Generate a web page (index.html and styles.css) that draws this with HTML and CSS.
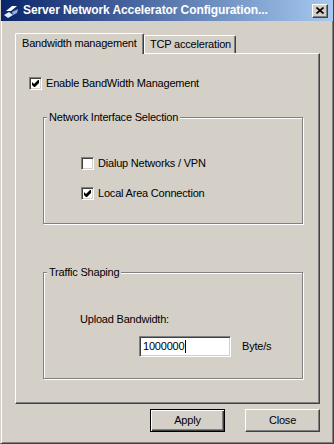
FILE: index.html
```html
<!DOCTYPE html>
<html lang="en">
<head>
  <meta charset="UTF-8" />
  <title>Server Network Accelerator Configuration</title>
  <link rel="stylesheet" href="styles.css">
</head>
<body>
  <div class="window">
    <div class="titlebar">
      <svg class="app-icon" width="16" height="16" viewBox="0 0 16 16">
        <polygon points="3,8 9,3 14,3 8,8" fill="#ffffff"/>
        <polygon points="1,12 6,9 10,12 5,15" fill="#e4ecf8"/>
        <polygon points="9,9 15,6 14,10 10,12" fill="#8fb2e0"/>
      </svg>
      <span class="title">Server Network Accelerator Configuration...</span>
      <span class="close-btn">
        <svg width="8" height="7" viewBox="0 0 8 7">
          <path d="M0.5 0.5 L7.5 6.5 M7.5 0.5 L0.5 6.5" stroke="#000" stroke-width="1.7"/>
        </svg>
      </span>
    </div>

    <div class="content">
      <div class="tabs">
        <div class="tab active">Bandwidth management</div>
        <div class="tab">TCP acceleration</div>
      </div>

      <div class="panel">
        <label class="check enable">
          <span class="box"><svg width="7" height="7" viewBox="0 0 7 7"><polygon points="0,2 2,4 6,0 7,0 7,3 3,7 2,7 0,5" fill="#000"/></svg></span>
          Enable BandWidth Management
        </label>

        <fieldset class="group network">
          <legend>Network Interface Selection</legend>
          <div class="group-body">
            <label class="check">
              <span class="box"></span>
              Dialup Networks / VPN
            </label>
            <label class="check">
              <span class="box"><svg width="7" height="7" viewBox="0 0 7 7"><polygon points="0,2 2,4 6,0 7,0 7,3 3,7 2,7 0,5" fill="#000"/></svg></span>
              Local Area Connection
            </label>
          </div>
        </fieldset>

        <fieldset class="group traffic">
          <legend>Traffic Shaping</legend>
          <div class="group-body">
            <div class="field-label">Upload Bandwidth:</div>
            <div class="field-row">
              <div class="textbox">1000000<span class="caret"></span></div>
              <span class="unit">Byte/s</span>
            </div>
          </div>
        </fieldset>
      </div>

      <div class="actions">
        <button class="btn default">Apply</button>
        <button class="btn">Close</button>
      </div>
    </div>
  </div>
</body>
</html>
```

FILE: styles.css
```css
* {
  box-sizing: border-box;
  margin: 0;
  padding: 0;
}

body {
  background: #d4d0c8;
  font-family: "Liberation Sans", Arial, sans-serif;
  font-size: 11px;
  line-height: 13px;
  letter-spacing: -0.2px;
  color: #000;
}

.window {
  width: 334px;
  height: 444px;
  display: flex;
  flex-direction: column;
  border-left: 1px solid #d4d0c8;
  border-right: 1px solid #404040;
  border-bottom: 1px solid #404040;
  box-shadow: inset 1px 0 #ffffff, inset -1px -1px #808080;
}

/* title bar */
.titlebar {
  height: 21px;
  display: flex;
  align-items: center;
  padding: 0 5px 0 2px;
  background: linear-gradient(to right, #0a246a, #a6caf0);
}

.app-icon {
  flex: none;
}

.title {
  flex: 1;
  margin-left: 4px;
  color: #fff;
  font-weight: bold;
  font-size: 12px;
  letter-spacing: -0.1px;
  white-space: nowrap;
}

.close-btn {
  width: 16px;
  height: 14px;
  display: flex;
  align-items: center;
  justify-content: center;
  background: #d4d0c8;
  border-top: 1px solid #fff;
  border-left: 1px solid #fff;
  border-right: 1px solid #404040;
  border-bottom: 1px solid #404040;
  box-shadow: inset -1px -1px #808080;
}

/* dialog body */
.content {
  flex: 1;
  display: flex;
  flex-direction: column;
  padding: 12px 13px 0 14px;
}

.tabs {
  display: flex;
  align-items: flex-end;
  height: 21px;
  margin-bottom: -1px;
}

.tab {
  height: 18px;
  width: 92px;
  margin-bottom: 1px;
  padding: 2px 0 0 5px;
  border-top: 1px solid #fff;
  border-left: 1px solid #fff;
  border-right: 1px solid #404040;
  border-radius: 2px 2px 0 0;
  box-shadow: inset -1px 0 #808080;
  white-space: nowrap;
}

.tab.active {
  position: relative;
  z-index: 1;
  width: 129px;
  height: 21px;
  margin-bottom: 0;
  padding: 3px 0 0 6px;
  background: #d4d0c8;
}

.panel {
  height: 351px;
  border-top: 1px solid #fff;
  border-left: 1px solid #fff;
  border-right: 1px solid #404040;
  border-bottom: 1px solid #404040;
  box-shadow: inset -1px -1px #808080;
}

/* checkboxes */
.check {
  display: flex;
  align-items: center;
  gap: 4px;
}

.enable {
  margin: 23px 0 0 13px;
}

.box {
  width: 13px;
  height: 13px;
  display: flex;
  align-items: center;
  justify-content: center;
  background: #fff;
  border-top: 1px solid #808080;
  border-left: 1px solid #808080;
  border-right: 1px solid #fff;
  border-bottom: 1px solid #fff;
  box-shadow: inset 1px 1px #404040, inset -1px -1px #d4d0c8;
}

/* group boxes */
.group {
  width: 260px;
  margin-left: 27px;
  border: 1px solid #808080;
  box-shadow: inset 1px 1px #fff, 1px 1px #fff;
}

.group legend {
  margin-left: 3px;
  padding: 0 2px;
  background: #d4d0c8;
}

.network {
  margin-top: 21px;
}

.network .group-body {
  display: flex;
  flex-direction: column;
  gap: 17px;
  padding: 33px 0 23px 37px;
}

.traffic {
  margin-top: 42px;
}

.traffic .group-body {
  padding: 34px 0 21px 36px;
}

.field-row {
  display: flex;
  align-items: center;
  gap: 11px;
  margin-top: 10px;
}

.textbox {
  width: 92px;
  height: 21px;
  margin-left: 59px;
  display: flex;
  align-items: center;
  padding-left: 3px;
  background: #fff;
  border-top: 1px solid #808080;
  border-left: 1px solid #808080;
  border-right: 1px solid #fff;
  border-bottom: 1px solid #fff;
  box-shadow: inset 1px 1px #404040, inset -1px -1px #d4d0c8;
}

.caret {
  width: 1px;
  height: 13px;
  margin-left: 1px;
  background: #000;
}

/* buttons */
.actions {
  display: flex;
  justify-content: flex-end;
  gap: 20px;
  margin-top: 5px;
}

.btn {
  width: 75px;
  height: 23px;
  font: inherit;
  letter-spacing: inherit;
  color: #000;
  background: #d4d0c8;
  border-top: 1px solid #fff;
  border-left: 1px solid #fff;
  border-right: 1px solid #404040;
  border-bottom: 1px solid #404040;
  box-shadow: inset -1px -1px #808080;
}

.btn.default {
  border: 1px solid #000;
  box-shadow: inset 1px 1px #fff, inset -1px -1px #404040, inset -2px -2px #808080;
}
```
